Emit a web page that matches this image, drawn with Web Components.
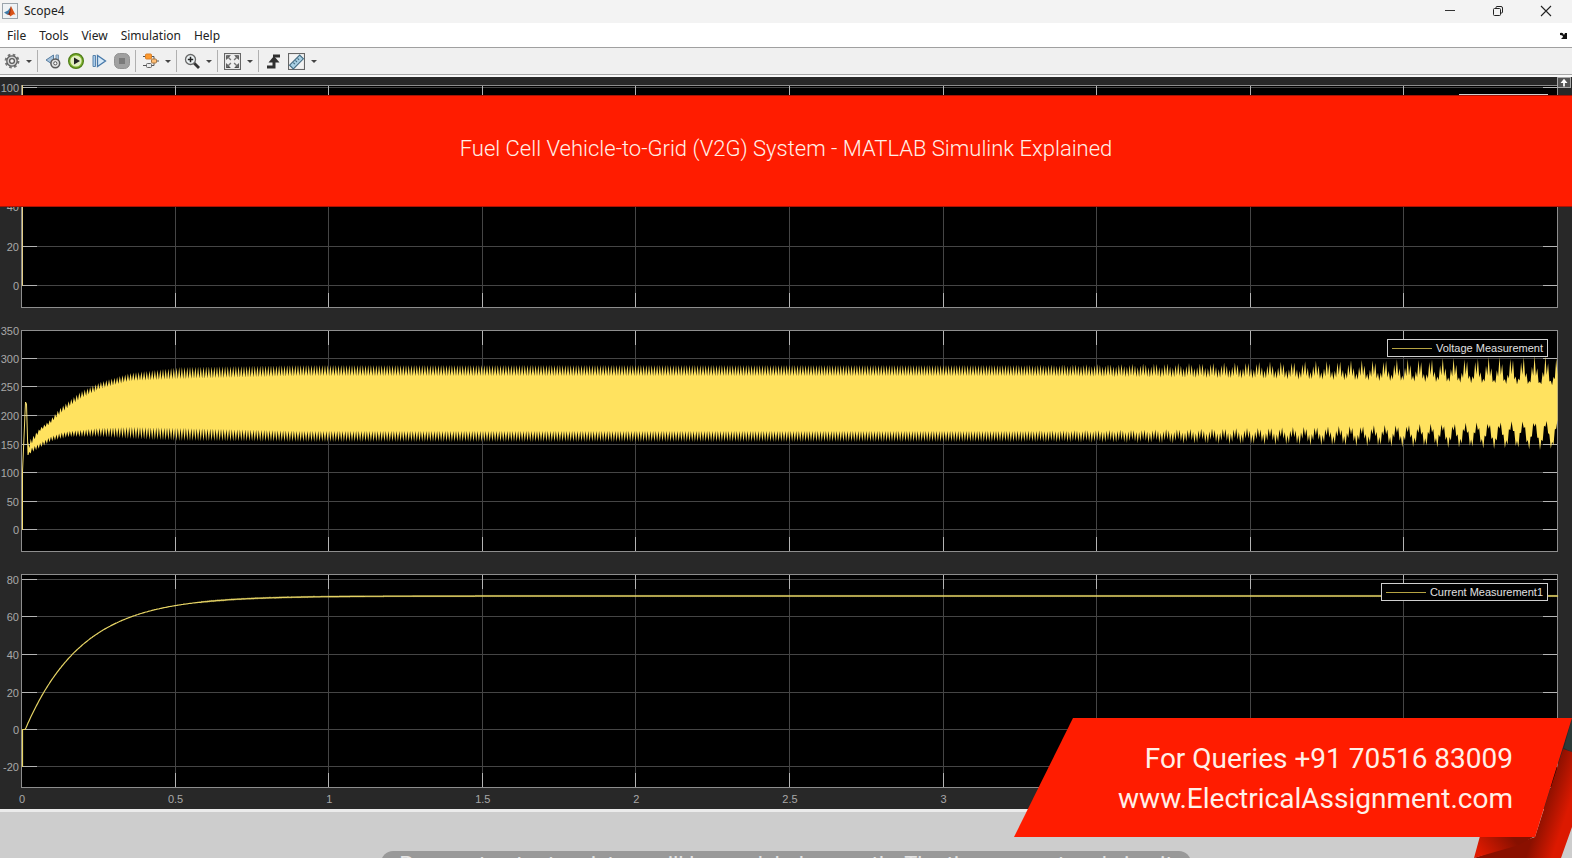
<!DOCTYPE html>
<html lang="en">
<head>
<meta charset="utf-8">
<title>Scope4</title>
<style>
  html, body {
    margin: 0;
    min-height: 100vh;
    overflow: hidden;
    background: #cdcdcd;
    font-family: "Noto Sans", "Open Sans", sans-serif;
  }
</style>
</head>
<body>
<scope-app></scope-app>

<script>
"use strict";

const ICONS = {
  gear: `<circle cx="8" cy="8" r="6.4" fill="none" stroke="#777" stroke-width="2" stroke-dasharray="2.6 2.42"/>
    <circle cx="8" cy="8" r="5.2" fill="#d6d6d6" stroke="#5e5e5e" stroke-width="1.3"/>
    <circle cx="8" cy="8" r="2.4" fill="#f4f4f4" stroke="#5a5a5a" stroke-width="1.3"/>`,
  back: `<path d="M8.5 2v10L1 7z" fill="#a8c4dd" stroke="#587d9f"/><path d="M11 2h2.5v9H11z" fill="#a8c4dd" stroke="#7895b0"/>
    <circle cx="10.3" cy="10.3" r="4.4" fill="#e0e0e0" stroke="#5a5a5a" stroke-width="1.5"/>
    <circle cx="10.3" cy="10.3" r="1.6" fill="#fff" stroke="#555"/>`,
  run: `<circle cx="8" cy="8" r="7.4" fill="#7fb32d" stroke="#4d7c17" stroke-width="1.2"/>
    <circle cx="8" cy="8" r="5.6" fill="#e2efc0"/><path d="M6 4.4v7.2L12 8z" fill="#222"/>`,
  step: `<path d="M2 2.5h2.5v11H2z" fill="#a9cceb" stroke="#5a84ad"/><path d="M6.5 2.5v11L14.5 8z" fill="#d6e9f8" stroke="#4779aa" stroke-width="1.3"/>`,
  stop: `<rect x="0.5" y="0.5" width="15" height="15" rx="5" fill="#a0a0a0" stroke="#929292"/><rect x="5" y="5" width="6" height="6" fill="#7a7a7a"/>`,
  blocks: `<path d="M0 3.5h3M8 3.5h3v3M11 9v3.5H7M0 12.5h4M13 8h3" fill="none" stroke="#555"/>
    <rect x="2.5" y="1" width="6" height="5" rx="1" fill="#ff9a2e" stroke="#d9822c"/>
    <rect x="8.5" y="6" width="5" height="4" rx="1" fill="#ffbe74" stroke="#a87844"/>
    <rect x="3.5" y="10.5" width="5" height="4" rx="1" fill="#ececec" stroke="#666"/>`,
  zoom: `<path d="M10 10l5 5" stroke="#333" stroke-width="2.8"/><circle cx="6.5" cy="6.5" r="5" fill="#edf3f5" stroke="#696969" stroke-width="1.3"/>
    <path d="M3.8 6.5h5.4M6.5 3.8v5.4" stroke="#222" stroke-width="1.5"/>`,
  fit: `<rect x="0.5" y="0.5" width="15" height="15" fill="#efefef" stroke="#666"/>
    <path d="M2 2h4.500L2 6.500zM14 2v4.500L9.500 2zM2 14V9.500L6.500 14zM14 14H9.500L14 9.500z" fill="#4c4c4c"/>
    <path d="M3 3l3.500 3.500M13 3L9.500 6.500M3 13l3.500-3.500M13 13L9.500 9.500" stroke="#777" stroke-width="1.300"/>`,
  trigger: `<path d="M1 14h7V9" fill="none" stroke="#303030" stroke-width="3"/><path d="M7 3h7" stroke="#303030" stroke-width="3"/><path d="M2.500 9.500L8 3l5.500 6.500z" fill="#303030"/>`,
  measure: `<rect x="0.500" y="0.500" width="15" height="15" fill="#f3f3f3" stroke="#666"/>
    <path d="M1.500 11.500l9.500-9.500 3.500 3.500-9.500 9.500z" fill="#a9d0e4" stroke="#426b82"/>
    <path d="M5 9l1.500 1.500M7 7l1.500 1.500M9 5l1.500 1.500" stroke="#426b82"/>`,
  minimize: `<path d="M3 7.500h10" stroke="#333"/>`,
  restore: `<path d="M6 5.500V4.500q0-1 1-1h4q1.500 0 1.500 1.500v4q0 1-1 1h-1" fill="none" stroke="#222"/><rect x="3.500" y="5.500" width="7" height="7" rx="1" fill="none" stroke="#222"/>`,
  close: `<path d="M3 3l10 10M13 3L3 13" stroke="#222" stroke-width="1.100"/>`,
  dock: `<path d="M4 6q3-1 4 2l1-2h2v6H5l2-2q0-2-3-2z" fill="#111"/>`,
  up: `<path d="M8 3l4 5H9v4H7V8H4z" fill="#fff"/>`,
  logo: `<rect x="0.500" y="0.500" width="15" height="15" fill="#eef2f5" stroke="#9ba4ac"/>
    <path d="M2 9.500L6 7.500l3-4-2 7-2 1z" fill="#3d7aa8"/><path d="M9 3L13.500 12q-1.500-1.500-3 0L8 13.500 7 10z" fill="#d95319"/><path d="M9 3L7 10l-2 1.500 3 .5z" fill="#7c2411"/>`
};

function icon(name, size = 16) {
  return `<svg width="${size}" height="${size}" viewBox="0 0 16 16" aria-hidden="true">${ICONS[name] || ""}</svg>`;
}

class IconButton extends HTMLElement {
  connectedCallback() {
    this.attachShadow({ mode: "open" });
    this.shadowRoot.innerHTML = `
<style>
:host { display: block; width: 23px; }
button {
  display: flex;
  align-items: center;
  justify-content: center;
  width: 100%;
  height: 100%;
  padding: 0;
  border: 0;
  background: none;
}
svg { display: block; }
</style>
<button aria-label="${this.getAttribute("label")}">${icon(this.getAttribute("icon"), this.getAttribute("size") || 16)}</button>
`;
  }
}
customElements.define("icon-button", IconButton);

class MoreButton extends HTMLElement {
  connectedCallback() {
    this.attachShadow({ mode: "open" });
    this.shadowRoot.innerHTML = `
<style>
:host { display: block; width: 12px; }
button { display: grid; place-items: center; width: 100%; height: 100%; padding: 0; border: 0; background: none; }
i { border: solid transparent; border-width: 3px 3px 0; border-top-color: #444; }
</style>
<button aria-label="${this.getAttribute("label")}"><i></i></button>
`;
  }
}
customElements.define("more-button", MoreButton);

class TitleBar extends HTMLElement {
  connectedCallback() {
    this.attachShadow({ mode: "open" });
    this.shadowRoot.innerHTML = `
<style>
:host {
  display: flex;
  align-items: center;
  height: 23px;
  padding: 0 2px;
  background: #f3f3f3;
  color: #222;
  font-size: 12px;
}
svg { margin-right: 6px; }
span { flex: 1; line-height: 20px; }
icon-button { width: 48px; height: 20px; }
:host > * { margin-bottom: 2px; }
</style>
${icon("logo")}
<span><slot></slot></span>
<icon-button icon="minimize" label="Minimize"></icon-button>
<icon-button icon="restore" label="Restore"></icon-button>
<icon-button icon="close" label="Close"></icon-button>
`;
  }
}
customElements.define("title-bar", TitleBar);

class MenuBar extends HTMLElement {
  connectedCallback() {
    const items = this.getAttribute("items").split(",");
    this.attachShadow({ mode: "open" });
    this.shadowRoot.innerHTML = `
<style>
:host { display: flex; align-items: center; height: 24px; background: #fff; border-bottom: 1px solid #a0a0a0; }
nav { display: flex; flex: 1; gap: 13px; padding: 1px 0 0 7px; }
button { padding: 0; border: 0; background: none; color: #222; font: inherit; font-size: 12px; line-height: 20px; }
icon-button { width: 16px; }
</style>
<nav>${items.map(name => `<button>${name}</button>`).join("")}</nav>
<icon-button icon="dock" label="Dock window"></icon-button>
`;
  }
}
customElements.define("menu-bar", MenuBar);

class ToolBar extends HTMLElement {
  connectedCallback() {
    this.attachShadow({ mode: "open" });
    this.shadowRoot.innerHTML = `
<style>
:host { display: flex; height: 26px; background: #f0f0f0; border-bottom: 1px solid #a8a8a8; box-shadow: 0 2px #fafafa; margin-bottom: 2px; }
hr { width: 1px; margin: 2px 3px 2px 2px; border: 0; background: #b0b0b0; }
</style>
<icon-button icon="gear" label="Configuration"></icon-button><more-button label="Configuration options"></more-button>
<hr>
<icon-button icon="back" label="Step back"></icon-button>
<icon-button icon="run" label="Run"></icon-button>
<icon-button icon="step" label="Step forward"></icon-button>
<icon-button icon="stop" label="Stop"></icon-button>
<hr>
<icon-button icon="blocks" label="Highlight block"></icon-button><more-button label="Highlight options"></more-button>
<hr>
<icon-button icon="zoom" label="Zoom"></icon-button><more-button label="Zoom options"></more-button>
<hr>
<icon-button icon="fit" size="17" label="Scale axes"></icon-button><more-button label="Scale options"></more-button>
<hr>
<icon-button icon="trigger" label="Triggers"></icon-button>
<icon-button icon="measure" size="17" label="Measurements"></icon-button><more-button label="Measurement options"></more-button>
`;
  }
}
customElements.define("tool-bar", ToolBar);

/**
 * One display of the scope: axes, grid, trace and legend.
 *
 * `ticks` is a list of value:y pairs; a tick without a value is drawn
 * with no label.
 */
class ScopePlot extends HTMLElement {
  connectedCallback() {
    this.attachShadow({ mode: "open" });
    this.shadowRoot.innerHTML = `
<style>
:host { display: block; position: relative; }
svg { display: block; width: 100%; overflow: visible; }
text { font: 11px "Liberation Sans", Arial, sans-serif; fill: #a9a9a9; }
.legend {
  position: absolute;
  top: 9px;
  right: 24px;
  display: flex;
  align-items: center;
  gap: 4px;
  box-sizing: border-box;
  min-width: 89px;
  height: 18px;
  padding: 0 4px;
  border: 1px solid #d0d0d0;
  background: #000;
  color: #e0e0e0;
  font: 11px "Liberation Sans", Arial, sans-serif;
}
.legend::before { content: ""; width: 40px; height: 1px; background: #b5a342; }
</style>
<svg></svg>
<div class="legend"><slot></slot></div>
`;
    this.svg = this.shadowRoot.querySelector("svg");
    this.draw = this.draw.bind(this);
    window.addEventListener("resize", this.draw);
    this.draw();
  }

  disconnectedCallback() {
    window.removeEventListener("resize", this.draw);
  }

  draw() {
    const width = this.clientWidth;
    const height = Number(this.getAttribute("height"));
    const left = 22;
    const right = width - 14;
    const step = (right - left) / 10;
    let out = `<rect x="${left}" y="0" width="${right - left}" height="${height}" fill="#000"/>`;
    let grid = "";
    let marks = "";
    let labels = "";

    for (let i = 1; i < 10; i++) {
      const x = Math.round(left + i * step) - 0.5;
      grid += `M${x} 0V${height}`;
      marks += `M${x} 0v15M${x} ${height}v-15`;
    }
    this.getAttribute("ticks").split(" ").forEach(tick => {
      const [value, pos] = tick.split(":");
      const y = Number(pos) + 0.5;
      grid += `M${left} ${y}H${right}`;
      marks += `M${left} ${y}h15M${right} ${y}h-15`;
      if (value) labels += `<text x="19" y="${y + 4.5}" text-anchor="end">${value}</text>`;
    });
    (this.getAttribute("times") || "").split(" ").filter(Boolean).forEach((time, i) => {
      labels += `<text x="${left + i * step}" y="${height + 15}" text-anchor="middle">${time}</text>`;
    });

    out += `<path d="${grid}" stroke="#454545"/>`;
    out += `<path d="${marks}" stroke="#b4b4b4"/>`;
    out += `<rect x="${left - 0.5}" y="0.5" width="${right - left}" height="${height - 1}" fill="none" stroke="#8e8e8e"/>`;
    out += this.trace(left, right) + labels;
    this.svg.setAttribute("height", height);
    this.svg.innerHTML = out;
  }

  trace(left, right) {
    const kind = this.getAttribute("trace");
    if (kind === "voltage") return this.voltage(left, right);
    if (kind === "current") return this.current(left, right);
    return `<path d="M22.5 0V201" stroke="#e2cc86"/>`;
  }

  // Ripple between two envelopes, with a beat that grows towards the end
  voltage(left, right) {
    const knots = [
      [6, 112, 120, 125, 120], [18, 98, 101, 118, 113], [28, 90, 94, 112, 107], [38, 78, 84, 109, 103],
      [48, 70, 76, 107, 101], [58, 62, 69, 107, 100], [78, 52, 59, 107, 98], [108, 43, 51, 109, 97],
      [158, 37, 49, 111, 98], [278, 35, 46, 112, 101], [5000, 35, 46, 112, 101]
    ];
    const at = x => {
      const i = knots.findIndex(k => k[0] >= x);
      if (i < 1) return knots[0];
      const a = knots[i - 1];
      const c = knots[i];
      const f = (x - a[0]) / (c[0] - a[0]);
      return a.map((v, n) => v + (c[n] - v) * f);
    };
    const span = right - left;
    const top = [];
    const bottom = [];
    let peak = true;

    for (let x = 6; x < span; x += 1.35) {
      const k = at(x);
      const t = Math.max(0, (x / span - 0.6) / 0.4);
      const beat = 14 * Math.pow(t, 1.8) * Math.cos((x - span + 12) * 2 * Math.PI / 11.5);
      const sag = 4 * t * t;
      const hi = peak ? k[1] + sag - beat : k[2] + sag - beat * 0.4;
      const lo = peak ? k[3] - sag - beat * 0.9 : k[4] - beat * 0.8;
      top.push(`${(left + x).toFixed(1)} ${hi.toFixed(1)}`);
      bottom.unshift(`${(left + x).toFixed(1)} ${Math.max(lo, hi + 4).toFixed(1)}`);
      peak = !peak;
    }
    return `<path d="M22.5 200V142L25.500 72 26.500 74 28 125" fill="none" stroke="#f4dd72"/>
      <path d="M${top.join("L")}L${bottom.join("L")}z" fill="#ffe25f"/>`;
  }

  current(left, right) {
    let d = "M22.5 193V155.500H25";
    for (let x = 26; x <= right; x++) {
      const ripple = x > 200 ? (x % 2 ? 0.4 : -0.4) : 0;
      d += `L${x} ${(22 + 134 * Math.exp(-(x - 25) / 57) + ripple).toFixed(1)}`;
    }
    return `<path d="${d}" fill="none" stroke="#e6d465" stroke-width="1.200"/>`;
  }
}
customElements.define("scope-plot", ScopePlot);

class ScopePanel extends HTMLElement {
  connectedCallback() {
    this.attachShadow({ mode: "open" });
    this.shadowRoot.innerHTML = `
<style>
:host {
  display: flex;
  flex-direction: column;
  gap: 22px;
  position: relative;
  padding: 8px 0 21px;
  background: #282828;
  border-bottom: 3px solid #ebebeb;
}
icon-button { position: absolute; top: 0; right: 1px; width: 14px; height: 11px; background: #555; outline: 1px solid #aaa; outline-offset: -1px; }
</style>
<slot></slot>
<icon-button icon="up" label="Maximize axes"></icon-button>
`;
  }
}
customElements.define("scope-panel", ScopePanel);

class TitleBanner extends HTMLElement {
  connectedCallback() {
    this.attachShadow({ mode: "open" });
    this.shadowRoot.innerHTML = `
<style>
:host {
  position: absolute;
  top: 95px;
  left: 0;
  right: 0;
  display: grid;
  place-items: center;
  box-sizing: border-box;
  height: 112px;
  padding-bottom: 4px;
  border: solid #a81305;
  border-width: 1px 0;
  background: #ff1c00;
  color: #fff0e8;
  font: 300 22px/28px Roboto, sans-serif;
}
</style>
<slot></slot>
`;
  }
}
customElements.define("title-banner", TitleBanner);

class ContactRibbon extends HTMLElement {
  connectedCallback() {
    this.attachShadow({ mode: "open" });
    this.shadowRoot.innerHTML = `
<style>
:host {
  position: absolute;
  right: 0;
  top: 718px;
  box-sizing: border-box;
  width: 558px;
  height: 140px;
  padding: 21px 59px 0 0;
  overflow: hidden;
  color: #fff0e8;
  font: 28px/40px Roboto, sans-serif;
  text-align: right;
}
svg { position: absolute; inset: 0; }
.lines { position: relative; }
</style>
<svg width="558" height="140" viewBox="0 0 558 140" aria-hidden="true">
  <defs>
    <linearGradient id="fold" gradientUnits="userSpaceOnUse" x1="530" y1="84" x2="560" y2="94">
      <stop offset="0" stop-color="#8a1000"/><stop offset="0.8" stop-color="#dc1900"/>
    </linearGradient>
    <linearGradient id="under" gradientUnits="userSpaceOnUse" x1="468" y1="138" x2="496" y2="116">
      <stop offset="0" stop-color="#e01a00"/><stop offset="1" stop-color="#861000"/>
    </linearGradient>
  </defs>
  <path d="M558 0v34l-8-4z" fill="#2c3a38"/>
  <path d="M549 31l9 3v75l-11 31h-87l61-21z" fill="url(#fold)"/>
  <path d="M466 118h55l-16 9-45 13z" fill="url(#under)"/>
  <path d="M59 0h499l-37 119H0z" fill="#ff1c00"/>
</svg>
<div class="lines"><slot></slot></div>
`;
  }
}
customElements.define("contact-ribbon", ContactRibbon);

class CaptionPill extends HTMLElement {
  connectedCallback() {
    this.attachShadow({ mode: "open" });
    this.shadowRoot.innerHTML = `
<style>
:host {
  position: absolute;
  top: 851px;
  left: 50%;
  transform: translateX(-50%);
  box-sizing: border-box;
  width: 810px;
  height: 40px;
  border-radius: 12px;
  background: #999;
  color: #e4e4e4;
  font: 22px/28px Roboto, sans-serif;
  text-align: center;
  white-space: nowrap;
}
</style>
<slot></slot>
`;
  }
}
customElements.define("caption-pill", CaptionPill);

class ScopeApp extends HTMLElement {
  connectedCallback() {
    this.attachShadow({ mode: "open" });
    this.shadowRoot.innerHTML = `
<style>
:host { display: block; position: relative; height: 100vh; overflow: hidden; }
a { color: inherit; text-decoration: none; }
</style>
<title-bar>Scope4</title-bar>
<menu-bar items="File,Tools,View,Simulation,Help"></menu-bar>
<tool-bar></tool-bar>
<scope-panel>
  <scope-plot height="223" ticks="100:2 :42 :82 40:121 20:161 0:200"></scope-plot>
  <scope-plot height="222" trace="voltage" ticks="350:0 300:28 250:56 200:85 150:114 100:142 50:171 0:199">Voltage Measurement</scope-plot>
  <scope-plot height="214" trace="current" ticks="80:5 60:42 40:80 20:118 0:155 -20:192" times="0 0.5 1 1.5 2 2.5 3">Current Measurement1</scope-plot>
</scope-panel>
<caption-pill>Power at output resistors will be modeled currently. The time current and circuit</caption-pill>
<title-banner>Fuel Cell Vehicle-to-Grid (V2G) System - MATLAB Simulink Explained</title-banner>
<contact-ribbon>
  <div>For Queries +91 70516 83009</div>
  <a href="#contact">www.ElectricalAssignment.com</a>
</contact-ribbon>
`;
  }
}
customElements.define("scope-app", ScopeApp);
</script>
</body>
</html>
